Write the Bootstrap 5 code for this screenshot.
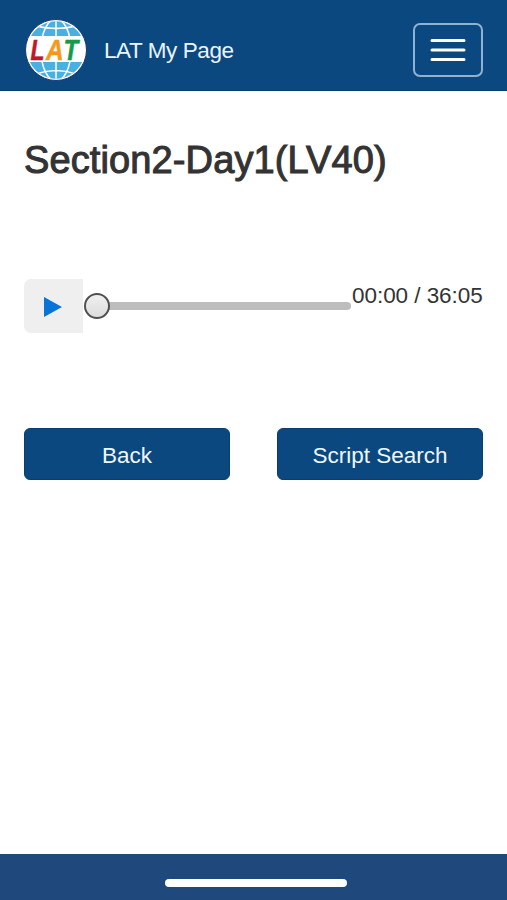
<!DOCTYPE html>
<html lang="en">
<head>
<meta charset="utf-8">
<meta name="viewport" content="width=device-width, initial-scale=1">
<title>LAT My Page</title>
<link href="https://cdn.jsdelivr.net/npm/bootstrap@5.3.0/dist/css/bootstrap.min.css" rel="stylesheet">
<style>
body{font-family:"Liberation Sans",Arial,sans-serif;font-size:22.5px;line-height:1.5;color:#333;background:#fff}
.site-bar{height:91px;padding-top:10px!important;background:#0b4880;border-bottom:1px solid #083c6c}
.brand-name{font-size:22.5px;color:#e9f5ff;letter-spacing:-.42px;padding-top:2px}
.menu-toggle{width:70px;height:54px;border:2px solid #8fb2d2;border-radius:7px;box-shadow:none!important}
.page-title{font-size:38px;line-height:46px;font-weight:400;color:#333;-webkit-text-stroke:1.05px #333;margin-top:46px;letter-spacing:.12px}
.player{margin-top:96px;height:54px}
.play-btn{width:59px;height:54px;padding:2px 2px 0 0;background:#efefef;border-radius:7px 0 0 7px}
.seek-thumb{width:26px;height:26px;margin-left:1px;border:2px solid #505050;background:linear-gradient(#f0f0f0,#dcdcdc) padding-box;z-index:1}
.seek-track{height:8px;background:#bdbdbd;border-radius:0 4px 4px 0;margin-left:-2px}
.play-time{width:132px;padding-left:1px;line-height:34px;letter-spacing:-.05px}
.actions{margin-top:95px;gap:47px}
.btn-lat{--bs-btn-color:#eef7ff;--bs-btn-bg:#0b4880;--bs-btn-border-color:#0a3e70;--bs-btn-hover-color:#fff;--bs-btn-hover-bg:#0a3e70;--bs-btn-border-radius:6px;--bs-btn-font-size:22.5px;height:52px;padding:3px 0 0}
.home-area{height:46px;padding-left:5px;background:#1f497c}
.home-bar{width:182px;height:8px;margin-top:25px}
</style>
<script src="https://cdn.jsdelivr.net/npm/bootstrap@5.3.0/dist/js/bootstrap.bundle.min.js" defer></script>
</head>
<body class="d-flex flex-column min-vh-100">
<nav class="site-bar navbar p-0 px-4 d-flex flex-nowrap align-items-center">
  <a class="d-flex align-items-center text-decoration-none" href="#">
    <svg width="64" height="64" viewBox="0 0 64 64" aria-label="LAT">
      <defs><clipPath id="globe"><circle cx="32" cy="32" r="28.8"/></clipPath></defs>
      <circle cx="32" cy="32" r="30.5" fill="#fff" stroke="#173878" stroke-width="1"/>
      <g clip-path="url(#globe)">
        <path d="M0 0H64V18H0zM0 44H64V64H0z" fill="#48b0e2"/>
        <g fill="none" stroke="#fff" stroke-width="1.5">
          <path d="M32 2V62M12 8Q32 13 52 8M12 56Q32 49 52 56"/>
          <ellipse cx="32" cy="32" rx="15" ry="31"/>
        </g>
        <path d="M2 18H62V44H2z" fill="#fff"/>
      </g>
      <g font-family="Liberation Sans,Arial,sans-serif" font-size="29" font-weight="700" font-style="italic">
        <text transform="translate(6.5 42) scale(.79 1)" fill="#c41626" stroke="#c41626" stroke-width=".5">L</text>
        <text transform="translate(22 42) scale(.84 1)" fill="#f39a1c" stroke="#f39a1c" stroke-width=".5">A</text>
        <text transform="translate(39.5 42) scale(.83 1)" fill="#159b48" stroke="#159b48" stroke-width=".5">T</text>
      </g>
    </svg>
    <span class="brand-name ms-3">LAT My Page</span>
  </a>
  <button class="menu-toggle navbar-toggler p-0 d-flex align-items-center justify-content-center" type="button" aria-label="Menu">
    <svg width="38" height="28" viewBox="0 0 38 28"><path d="M3 4.5H35M3 14H35M3 23.5H35" stroke="#fff" stroke-width="3" stroke-linecap="round"/></svg>
  </button>
</nav>
<main class="px-4 flex-grow-1">
  <h1 class="page-title mb-0 text-nowrap">Section2-Day1(LV40)</h1>
  <div class="player d-flex align-items-center">
    <button class="play-btn btn border-0 flex-shrink-0 d-flex align-items-center justify-content-center" type="button" aria-label="Play">
      <svg width="20" height="20" viewBox="0 0 20 20"><path d="M1 0L19 10L1 20z" fill="#0874d8"/></svg>
    </button>
    <div class="d-flex flex-grow-1 align-items-center">
      <span class="seek-thumb rounded-circle flex-shrink-0"></span>
      <span class="seek-track flex-grow-1"></span>
    </div>
    <span class="play-time align-self-start text-nowrap flex-shrink-0">00:00 / 36:05</span>
  </div>
  <div class="actions d-flex">
    <button class="btn btn-lat flex-fill w-50" type="button">Back</button>
    <button class="btn btn-lat flex-fill w-50" type="button">Script Search</button>
  </div>
</main>
<footer class="home-area d-flex justify-content-center">
  <span class="home-bar bg-white rounded-pill"></span>
</footer>
</body>
</html>
